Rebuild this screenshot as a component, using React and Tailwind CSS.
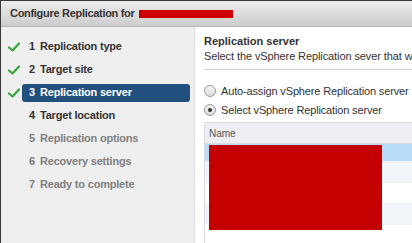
import React from 'react';

const steps = [
  { n: 1, label: 'Replication type', done: true },
  { n: 2, label: 'Target site', done: true },
  { n: 3, label: 'Replication server', done: true, active: true },
  { n: 4, label: 'Target location' },
  { n: 5, label: 'Replication options', disabled: true },
  { n: 6, label: 'Recovery settings', disabled: true },
  { n: 7, label: 'Ready to complete', disabled: true },
];

const Check = () => (
  <svg width="12" height="10" viewBox="0 0 12 10" className="shrink-0">
    <path d="M1 5.5 L4.5 8.5 L11 1.5" fill="none" stroke="#3aa53a" strokeWidth="2.2" strokeLinecap="round" strokeLinejoin="round" />
  </svg>
);

const Radio = ({ checked }) => (
  <span className="w-[12px] h-[12px] rounded-full border border-[#9a9a9a] bg-gradient-to-b from-[#f4f4f4] to-[#dcdcdc] flex items-center justify-center shrink-0">
    {checked && <span className="w-[4px] h-[4px] rounded-full bg-[#333]" />}
  </span>
);

export default function App() {
  const rows = [
    'h-[18px] bg-[#b9dcfa]',
    'h-[21px] bg-[#f1f5fa]',
    'h-[21px] bg-white',
    'h-[21px] bg-[#f1f5fa]',
  ];
  return (
    <div className="w-[412px] h-[243px] overflow-hidden flex flex-col bg-white font-['Liberation_Sans',Arial,sans-serif] border-l border-t border-[#3a3a3a]">
      {/* title bar */}
      <div className="h-[26px] shrink-0 flex items-center pl-[9px] gap-[4px] bg-gradient-to-b from-[#ececec] to-[#cdcdcd] border-b border-[#b5b5b5]">
        <span className="text-[11px] font-bold text-[#333] tracking-[-0.3px]">Configure Replication for</span>
        <span className="w-[94px] h-[8px] bg-[#cc0000] mt-[1px]" />
      </div>

      <div className="flex flex-1 min-h-0">
        {/* steps */}
        <div className="w-[194px] shrink-0 bg-[#efefef] border-r border-[#dcdcdc] pt-[8px] pl-[7px] pr-[4px]">
          {steps.map((s) => (
            <div key={s.n} className="h-[23px] flex items-center">
              <div className="w-[14px] flex justify-start">{s.done && <Check />}</div>
              <div
                className={`flex-1 h-[18px] flex items-center pl-[7px] rounded-[3px] text-[11px] font-bold tracking-[-0.2px] ${
                  s.active ? 'bg-[#21507e] text-white' : s.disabled ? 'text-[#808080]' : 'text-[#333]'
                }`}
              >
                <span className="w-[11px]">{s.n}</span>
                <span>{s.label}</span>
              </div>
            </div>
          ))}
        </div>

        {/* content */}
        <div className="flex-1 min-w-0 pl-[9px] pt-[7px] overflow-hidden">
          <div className="text-[11px] font-bold text-[#333] leading-[14px]">Replication server</div>
          <div className="text-[11px] text-[#333] leading-[14px] mt-[1px] whitespace-nowrap tracking-[-0.1px]">
            Select the vSphere Replication sever that will handle the replication
          </div>
          <div className="h-px bg-[#cfcfcf] mt-[6px]" />

          <div className="mt-[14px] flex flex-col gap-[5px] text-[11px] leading-[14px] text-[#333] tracking-[-0.15px]">
            <label className="flex items-center gap-[5px] whitespace-nowrap">
              <Radio />
              Auto-assign vSphere Replication server
            </label>
            <label className="flex items-center gap-[5px] whitespace-nowrap">
              <Radio checked />
              Select vSphere Replication server
            </label>
          </div>

          <div className="mt-[5px] border-l border-t border-[#d8dce0] relative">
            <div className="h-[21px] bg-[#eceef2] border-b border-[#d8dce0] flex items-center pl-[4px] text-[10px] text-[#555]">
              Name
            </div>
            {rows.map((c, i) => (
              <div key={i} className={`${c} border-b border-[#eef0f3]`} />
            ))}
            <div className="h-[40px]" />
            <div className="absolute left-[4px] top-[22px] w-[173px] h-[85px] bg-[#c40000]" />
          </div>
        </div>
      </div>
    </div>
  );
}
